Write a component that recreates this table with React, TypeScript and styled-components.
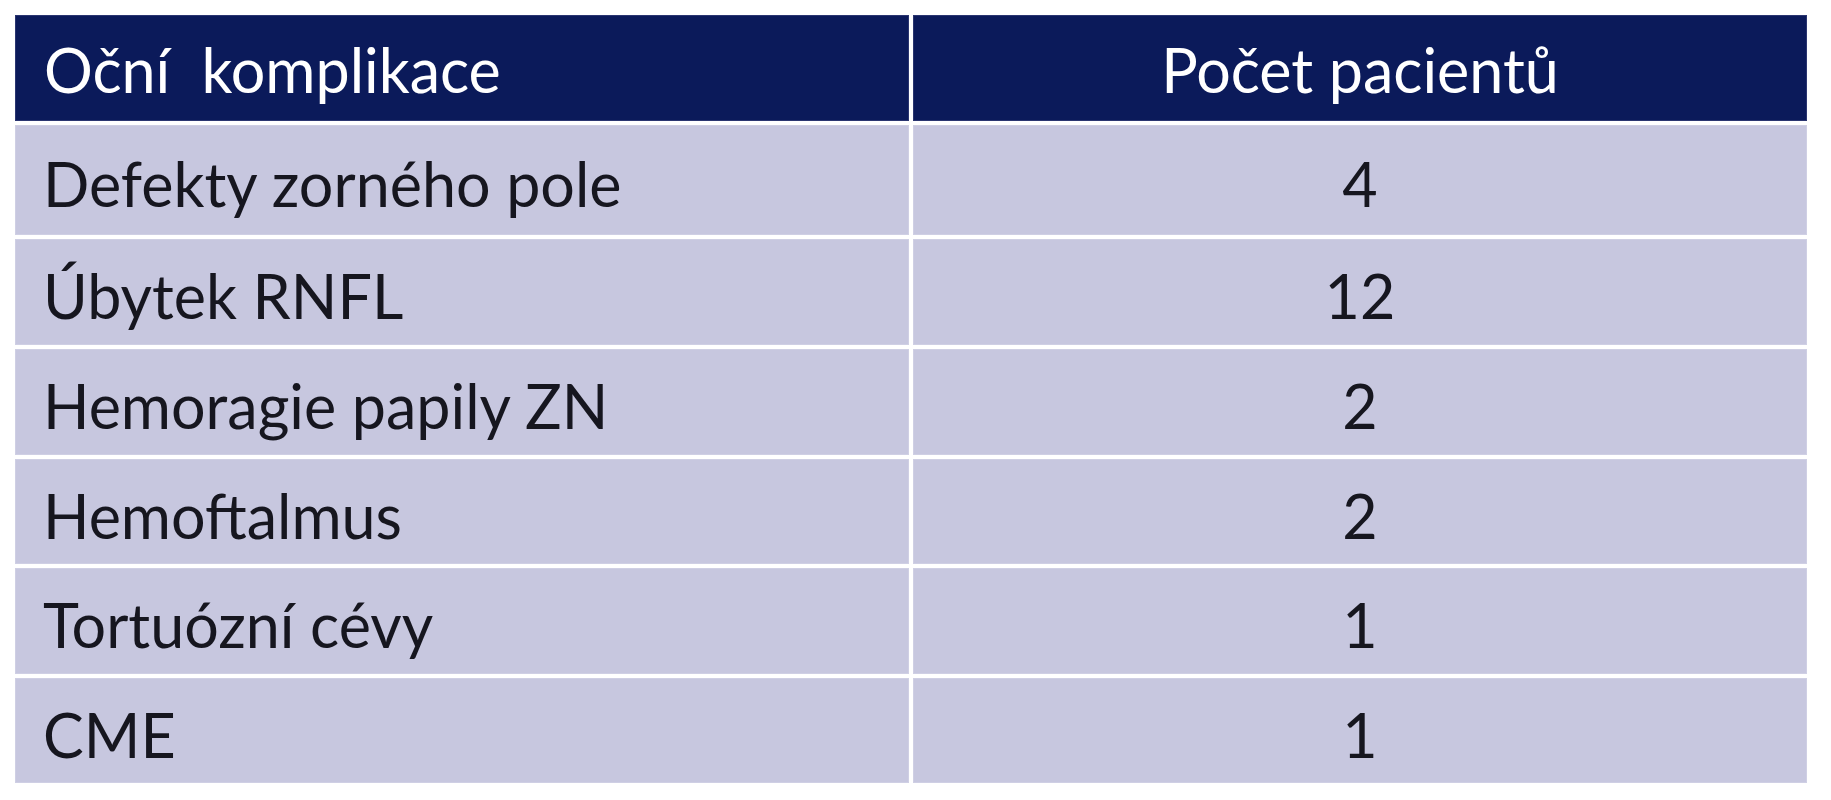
import React from "react"
import styled, { createGlobalStyle } from "styled-components"

const GlobalStyle = createGlobalStyle`
  html, body {
    margin: 0;
    padding: 0;
    background: #ffffff;
  }
  body {
    font-family: "Lato", "Open Sans", sans-serif;
  }
`

type Row = {
  label: string
  count: number
}

const rows: Row[] = [
  { label: "Defekty zorného pole", count: 4 },
  { label: "Úbytek RNFL", count: 12 },
  { label: "Hemoragie papily ZN", count: 2 },
  { label: "Hemoftalmus", count: 2 },
  { label: "Tortuózní cévy", count: 1 },
  { label: "CME", count: 1 },
]

const Page = styled.div`
  padding: 15px;
`

const Table = styled.div`
  display: grid;
  grid-template-columns: 894px 894px;
  grid-template-rows: 106px 110px 106px 106px 105px 106px 105px;
  gap: 4px;
  width: 1792px;
  background: #ffffff;
`

const HeaderCell = styled.div<{ $center?: boolean }>`
  display: flex;
  align-items: center;
  justify-content: ${(p) => (p.$center ? "center" : "flex-start")};
  padding: 3px 0 0 ${(p) => (p.$center ? "0" : "29px")};
  background: #0b1a5a;
  box-shadow: inset 0 0 0 1px #2a3570;
  color: #ffffff;
  font-size: 61px;
  line-height: 1.2;
  white-space: pre;
`

const Cell = styled.div<{ $center?: boolean }>`
  display: flex;
  align-items: center;
  justify-content: ${(p) => (p.$center ? "center" : "flex-start")};
  padding: 8px 0 0 ${(p) => (p.$center ? "0" : "28px")};
  background: #c7c7df;
  box-shadow: inset 0 0 0 1px #cfcfe4;
  color: #16161f;
  font-size: 61px;
  line-height: 1.2;
  white-space: pre;
`

export default function App() {
  return (
    <>
      <GlobalStyle />
      <Page>
        <Table>
          <HeaderCell>Oční  komplikace</HeaderCell>
          <HeaderCell $center>Počet pacientů</HeaderCell>
          {rows.map((r) => (
            <React.Fragment key={r.label}>
              <Cell>{r.label}</Cell>
              <Cell $center>{r.count}</Cell>
            </React.Fragment>
          ))}
        </Table>
      </Page>
    </>
  )
}
